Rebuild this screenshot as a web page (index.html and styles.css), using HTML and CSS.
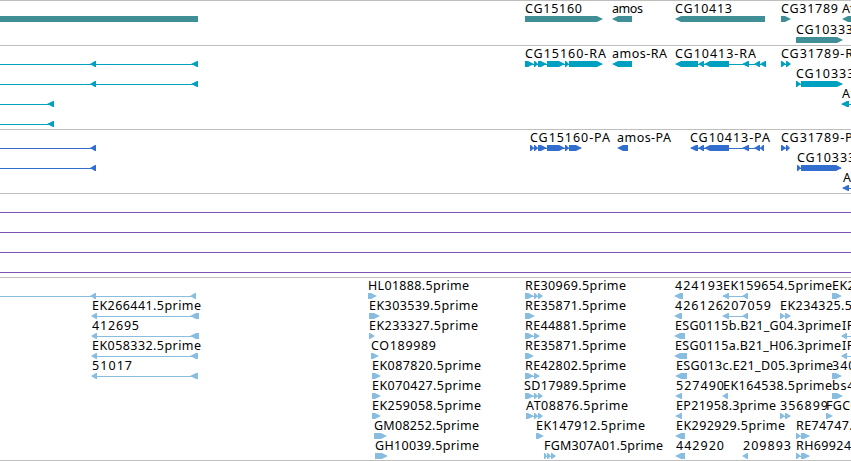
FILE: index.html
```html
<!DOCTYPE html>
<html lang="en">
<head>
    <meta charset="UTF-8">
    <title>Genome browser</title>
    <link rel="stylesheet" href="styles.css">
</head>
<body>
    <div class="browser">
        <div class="track genes"><svg id="genes"></svg></div>
        <div class="track transcripts"><svg id="transcripts"></svg></div>
        <div class="track proteins"><svg id="proteins"></svg></div>
        <div class="track spans"><svg id="spans"></svg></div>
        <div class="track ests"><svg id="ests"></svg></div>
    </div>
    <script src="tracks.js"></script>
</body>
</html>
```
FILE: styles.css
```css
body {
    margin: 0;
    background: #fff;
    overflow: hidden;
}
.browser {
    width: 851px;
    border-bottom: 1px solid #bebebe;
}
.track {
    box-sizing: border-box;
    border-top: 1px solid #bebebe;
}
.track svg {
    display: block;
    width: 100%;
    height: 100%;
}
.track text {
    font-family: "Noto Sans", "DejaVu Sans", sans-serif;
    font-size: 12.5px;
    fill: #000;
}
.genes {
    height: 45px;
    color: #408f96;
}
.transcripts {
    height: 84px;
    color: #00a0c0;
}
.proteins {
    height: 64px;
    color: #326ecd;
}
.spans {
    height: 84px;
    color: #7d54b4;
}
.ests {
    height: 183px;
    color: #88bde0;
}
.shape {
    fill: currentColor;
}
```
FILE: tracks.js
```js
// feature: [row, label, label start, label end, strand, [start, end, start, end, ...]]
const tracks = {
    genes: {
        pitch: 21,
        features: [
            [0, '', 0, 0, 0, [-5, 198]],
            [0, 'CG15160', 525, 582, 1, [525, 603]],
            [0, 'amos', 612, 643, -1, [612, 632]],
            [0, 'CG10413', 675, 732, -1, [675, 765]],
            [0, 'CG31789', 781, 838, 1, [781, 791]],
            [0, 'Atac2', 842, 875, -1, [842, 870]],
            [1, 'CG10333', 796, 853, 1, [796, 843]]
        ]
    },
    transcripts: {
        pitch: 20,
        features: [
            [0, '', 0, 0, -1, [-20, -10, 90, 96, 191, 198]],
            [1, '', 0, 0, -1, [-20, -10, 90, 96, 191, 198]],
            [2, '', 0, 0, -1, [-20, -10, 47, 54]],
            [3, '', 0, 0, -1, [-20, -10, 47, 54]],
            [0, 'CG15160-RA', 525, 606, 1, [525, 534, 534, 538, 538, 547, 547, 565, 565, 569, 569, 603]],
            [0, 'amos-RA', 612, 667, -1, [612, 632]],
            [0, 'CG10413-RA', 675, 756, -1, [675, 698, 698, 704, 704, 729, 742, 749, 754, 760, 760, 766]],
            [0, 'CG31789-RA', 781, 862, 1, [781, 786, 786, 791]],
            [1, 'CG10333-RA', 796, 877, 1, [796, 801, 801, 843]],
            [2, 'Atac2-RA', 842, 899, -1, [841, 849, 857, 870]]
        ]
    },
    proteins: {
        pitch: 20,
        features: [
            [0, '', 0, 0, -1, [-20, -10, 90, 96]],
            [1, '', 0, 0, -1, [-20, -10, 90, 96]],
            [0, 'CG15160-PA', 530, 610, 1, [530, 534, 534, 538, 538, 547, 547, 565, 565, 569, 569, 582]],
            [0, 'amos-PA', 617, 671, -1, [617, 628]],
            [0, 'CG10413-PA', 690, 770, -1, [690, 698, 698, 704, 704, 729, 742, 749, 754, 760, 760, 764]],
            [0, 'CG31789-PA', 781, 861, 1, [781, 786, 786, 790]],
            [1, 'CG10333-PA', 797, 877, 1, [797, 801, 801, 842]],
            [2, 'Atac2-PA', 843, 899, -1, [842, 849, 857, 870]]
        ]
    },
    spans: {
        pitch: 20,
        features: [
            [0, '', 0, 0, 0, [-5, -2, 860, 865]],
            [1, '', 0, 0, 0, [-5, -2, 860, 865]],
            [2, '', 0, 0, 0, [-5, -2, 860, 865]],
            [3, '', 0, 0, 0, [-5, -2, 860, 865]]
        ]
    },
    ests: {
        pitch: 20,
        features: [
            [0, '', 0, 0, -1, [-20, -10, 90, 96, 190, 196]],
            [1, 'EK266441.5prime', 92, 201, -1, [91, 97, 190, 199]],
            [2, '412695', 92, 139, -1, [91, 97, 190, 199]],
            [3, 'EK058332.5prime', 92, 201, -1, [91, 97, 190, 198]],
            [4, '51017', 92, 132, -1, [91, 97, 190, 198]],

            [0, 'HL01888.5prime', 368, 469, 1, [368, 377]],
            [1, 'EK303539.5prime', 369, 478, 1, [369, 380]],
            [2, 'EK233327.5prime', 369, 478, 1, [369, 375]],
            [3, 'CO189989', 371, 436, 1, [371, 379]],
            [4, 'EK087820.5prime', 372, 481, 1, [372, 381]],
            [5, 'EK070427.5prime', 372, 481, 1, [372, 381]],
            [6, 'EK259058.5prime', 372, 481, 1, [372, 381]],
            [7, 'GM08252.5prime', 374, 479, 1, [374, 387]],
            [8, 'GH10039.5prime', 375, 479, 1, [375, 388]],

            [0, 'RE30969.5prime', 525, 626, 1, [525, 534, 534, 538, 538, 543]],
            [1, 'RE35871.5prime', 525, 626, 1, [525, 535]],
            [2, 'RE44881.5prime', 525, 626, 1, [525, 534, 534, 540]],
            [3, 'RE35871.5prime', 525, 626, 1, [525, 534]],
            [4, 'RE42802.5prime', 525, 626, 1, [525, 534, 534, 540]],
            [5, 'SD17989.5prime', 524, 626, 1, [525, 534, 534, 538, 538, 543]],
            [6, 'AT08876.5prime', 526, 628, 1, [526, 534, 534, 538, 538, 543]],
            [7, 'EK147912.5prime', 536, 645, 1, [536, 544]],
            [8, 'FGM307A01.5prime', 544, 663, 1, [544, 547, 547, 551, 551, 556]],

            [0, '424193', 675, 723, -1, [674, 683]],
            [1, '426126', 675, 723, -1, [674, 682]],
            [2, 'ESG0115b.B21_G04.3prime', 675, 841, -1, [674, 685]],
            [3, 'ESG0115a.B21_H06.3prime', 675, 841, -1, [674, 687]],
            [4, 'ESG013c.E21_D05.3prime', 676, 833, -1, [675, 687]],
            [5, '527490', 676, 724, -1, [675, 682]],
            [6, 'EP21958.3prime', 676, 776, -1, [675, 682]],
            [7, 'EK292929.5prime', 676, 785, -1, [675, 685]],
            [8, '442920', 676, 724, -1, [675, 685]],

            [0, 'EK159654.5prime', 723, 832, -1, [722, 729, 742, 748]],
            [1, '207059', 723, 771, -1, [722, 729, 742, 748]],
            [5, 'EK164538.5prime', 723, 832, -1, [722, 728]],
            [8, '209893', 743, 791, -1, [742, 748]],
            [1, 'EK234325.5prime', 780, 889, 1, [780, 785, 785, 791]],
            [6, '356899', 780, 828, 1, [780, 785, 785, 791]],
            [7, 'RE74747.5prime', 796, 897, 1, [796, 801, 801, 810]],
            [8, 'RH69924.5prime', 796, 899, 1, [796, 801, 801, 810]],
            [0, 'EK271302.5prime', 832, 941, 1, [832, 842]],
            [2, 'IP02439.5prime', 842, 941, -1, [841, 847, 860, 870]],
            [3, 'IP02438.5prime', 842, 941, -1, [841, 847, 860, 870]],
            [4, '340215', 832, 880, 1, [832, 842]],
            [5, 'bs41e05.y1', 832, 905, 1, [832, 843]],
            [6, 'FGC0321', 826, 880, 1, [826, 833]]
        ]
    }
};

function arrow(start, end, strand, y) {
    const head = Math.min(7, end - start);
    if (strand > 0) {
        return `<path class="shape" d="M${start} ${y}H${end - head + 1}L${end} ${y + 3}L${end - head + 1} ${y + 6}H${start}Z"/>`;
    }
    if (strand < 0) {
        return `<path class="shape" d="M${end} ${y}H${start + head - 1}L${start} ${y + 3}L${start + head - 1} ${y + 6}H${end}Z"/>`;
    }
    return `<rect class="shape" x="${start}" y="${y}" width="${end - start}" height="6"/>`;
}

for (const name in tracks) {
    const track = tracks[name];
    let out = '';
    for (const [row, label, left, right, strand, blocks] of track.features) {
        const top = row * track.pitch;
        const first = blocks[0];
        const last = blocks[blocks.length - 1];
        if (blocks.length > 2) {
            out += `<rect class="shape" x="${first + 1}" y="${top + 18}" width="${last - first - 2}" height="1"/>`;
        }
        for (let i = 0; i < blocks.length; i += 2) {
            out += arrow(blocks[i], blocks[i + 1], strand, top + 15);
        }
        if (label) {
            out += `<text x="${left}" y="${top + 12}" textLength="${right - left}">${label}</text>`;
        }
    }
    document.getElementById(name).innerHTML = out;
}
```
